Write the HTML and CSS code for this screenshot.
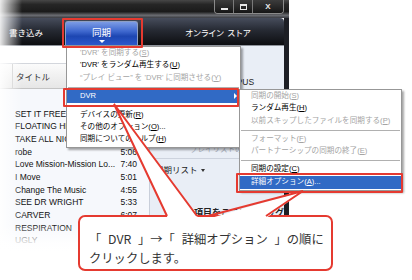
FILE: index.html
```html
<!DOCTYPE html>
<html lang="ja">
<head>
  <meta charset="UTF-8" />
  <meta name="viewport" content="width=device-width, initial-scale=1" />
  <title>同期 - 詳細オプション</title>
  <link rel="stylesheet" href="styles.css">
</head>
<body>

<div class="stage">

  <div class="window">
    <div class="titlebar">
      <div class="winbtns">
        <span class="wb wb-min"><i></i></span>
        <span class="wb wb-max"><i></i></span>
        <span class="wb wb-close">X</span>
      </div>
    </div>

    <div class="frame">
      <div class="tabbar">
        <span class="tab tab-burn">書き込み</span>
        <span class="tab tab-sync">同期</span>
        <span class="tab tab-store">オンライン ストア</span>
      </div>

      <div class="content">
        <div class="library">
          <div class="toolbar"></div>
          <div class="colhead"><span class="col">タイトル</span></div>
          <ul class="tracks">
            <li><span>SET IT FREE</span></li>
            <li><span>FLOATING HEART</span></li>
            <li><span>TAKE ALL NIGHT</span></li>
            <li><span>robe</span><span>5:06</span></li>
            <li><span>Love Mission-Mission Lo...</span><span>7:40</span></li>
            <li><span>I Move</span><span>5:01</span></li>
            <li><span>Change The Music</span><span>4:55</span></li>
            <li><span>SEE DR WRIGHT</span><span>5:33</span></li>
            <li><span>CARVER</span><span>6:07</span></li>
            <li><span>RESPIRATION</span></li>
            <li><span>UGLY</span></li>
          </ul>
        </div>

        <div class="synclist">
          <div class="device">OPUS</div>
          <div class="faint">プレイリストの再生</div>
          <div class="listhead">同期リスト <span class="drop"></span></div>
          <div class="hint">項目をここにドラッグ</div>
        </div>
      </div>
    </div>

    <div class="fade fade-left"></div>
    <div class="fade fade-bottom"></div>
  </div>

  <!-- sync menu -->
  <div class="menu menu-main">
    <div class="mi off"><span>'DVR' を同期する(<u>S</u>)</span></div>
    <div class="mi"><span>'DVR' をランダム再生する(<u>U</u>)</span></div>
    <div class="mi off"><span>“プレイ ビュー” を 'DVR' に同期させる(<u>Y</u>)</span></div>
    <div class="sep"></div>
    <div class="mi hot"><span>DVR</span><span class="arrow"></span></div>
    <div class="sep"></div>
    <div class="mi"><span>デバイスの更新(<u>R</u>)</span></div>
    <div class="mi"><span>その他のオプション(<u>O</u>)...</span></div>
    <div class="mi"><span>同期についてのヘルプ(<u>H</u>)</span></div>
  </div>

  <!-- DVR submenu -->
  <div class="menu menu-sub">
    <div class="mi off"><span>同期の開始(<u>S</u>)</span></div>
    <div class="mi"><span>ランダム再生(<u>H</u>)</span></div>
    <div class="mi off"><span>以前スキップしたファイルを同期する(<u>P</u>)</span></div>
    <div class="sep"></div>
    <div class="mi off"><span>フォーマット(<u>F</u>)</span></div>
    <div class="mi off"><span>パートナーシップの同期の終了(<u>E</u>)</span></div>
    <div class="sep"></div>
    <div class="mi"><span>同期の設定(<u>C</u>)</span></div>
    <div class="mi hot"><span>詳細オプション(<u>A</u>)...</span></div>
  </div>

  <div class="mark mark-tab"></div>
  <div class="mark mark-dvr"></div>
  <div class="mark mark-adv"></div>

  <div class="callout">
    「 DVR 」→「 詳細オプション 」の順に<br>クリックします。
  </div>

  <svg class="tails" width="412" height="280" viewBox="0 0 412 280">
    <polygon class="tail-fill" points="114,104 199.5,219.5 168.5,219.5"/>
    <polyline class="tail-edge" points="167,216 114,104 197,216"/>
    <polygon class="tail-fill" points="303,191 264,219.5 206,219.5"/>
    <polyline class="tail-edge" points="208,216 303,191 266,216"/>
  </svg>

</div>

</body>
</html>
```

FILE: styles.css
```css
html, body {
  margin: 0;
  padding: 0;
  background: #fff;
}

body {
  font-family: "Liberation Sans", "Noto Sans CJK JP", sans-serif;
}

.stage {
  position: relative;
  width: 412px;
  height: 280px;
  overflow: hidden;
}

/* player window */
.window {
  position: relative;
  width: 289px;
  height: 280px;
  display: flex;
  flex-direction: column;
  background: #fff;
}

.titlebar {
  height: 18px;
  display: flex;
  justify-content: flex-end;
  background: linear-gradient(#474747 0, #262626 25%, #1b1b1b 65%, #6b6d72 85%, #3a3c42 100%);
}

.winbtns {
  display: flex;
  height: 13px;
  margin-right: 5px;
  border: 1px solid #8a8a8a;
  border-top: none;
  border-radius: 0 0 4px 4px;
  overflow: hidden;
}

.wb {
  display: flex;
  align-items: center;
  justify-content: center;
  width: 18px;
  background: linear-gradient(#3c3c3c, #161616);
  border-left: 1px solid #7a7a7a;
  color: #e8e8e8;
  font-size: 8px;
  font-weight: bold;
}

.wb:first-child {
  border-left: none;
}

.wb-close {
  width: 30px;
}

.wb-min i {
  width: 7px;
  height: 2px;
  margin-top: 4px;
  background: #e8e8e8;
}

.wb-max i {
  width: 5px;
  height: 3px;
  border: 1px solid #e8e8e8;
  border-top-width: 2px;
}

.frame {
  flex: 1;
  display: flex;
  flex-direction: column;
  border-right: 5px solid #1d1f25;
  min-height: 0;
}

.tabbar {
  height: 27px;
  display: flex;
  align-items: flex-end;
  padding-left: 9px;
  background: linear-gradient(#474d5c 0, #262a33 45%, #0d0e11 100%);
  border-top-right-radius: 4px;
  color: #fff;
  font-size: 8.5px;
}

.tab {
  align-self: center;
  white-space: nowrap;
}

.tab-sync {
  align-self: flex-end;
  position: relative;
  width: 73px;
  height: 24px;
  margin-left: 22px;
  box-sizing: border-box;
  text-align: center;
  line-height: 22px;
  font-size: 9.5px;
  border: 1px solid #8e9fc4;
  border-bottom: none;
  border-radius: 3px 3px 0 0;
  background: linear-gradient(#7c9be4 0, #3f68cf 40%, #1d46b2 62%, #2b58cc 100%);
}

.tab-sync::after {
  content: "";
  position: absolute;
  left: 50%;
  bottom: 2px;
  margin-left: -3px;
  border-top: 3px solid #fff;
  border-left: 3px solid transparent;
  border-right: 3px solid transparent;
}

.tab-store {
  margin-left: 47px;
  letter-spacing: -0.8px;
  word-spacing: 2px;
}

.content {
  flex: 1;
  display: flex;
  border-top: 1px solid #8f949c;
  min-height: 0;
}

.library {
  width: 155px;
  background: #f6f8fc;
  border-right: 1px solid #c9cfda;
  box-sizing: border-box;
}

.toolbar {
  height: 17px;
  background: #fff;
  border-bottom: 1px solid #d3d6dc;
}

.colhead {
  height: 24px;
  display: flex;
  background: linear-gradient(#fbfbfb, #e6e6e6);
  border-bottom: 1px solid #c4c4c4;
  font-size: 8.5px;
  color: #333;
}

.col {
  display: flex;
  align-items: center;
  margin-left: 12px;
  padding-left: 3px;
  border-left: 1px solid #c8c8c8;
}

.tracks {
  list-style: none;
  margin: 18.7px 0 0;
  padding: 0;
  font-size: 8.5px;
  color: #111;
}

.tracks li {
  display: flex;
  justify-content: space-between;
  height: 12.67px;
  line-height: 12.67px;
  padding: 0 12px 0 15px;
  white-space: nowrap;
}

.synclist {
  flex: 1;
  display: flex;
  flex-direction: column;
  background: #e9eef6;
  font-size: 8.5px;
  color: #222;
}

.device {
  margin-top: 30px;
  height: 12px;
  line-height: 12px;
  padding-left: 80px;
}

.faint {
  margin-top: 56px;
  height: 12px;
  line-height: 12px;
  padding: 0 0 2px 40px;
  color: #a9b0bc;
  font-size: 7.5px;
  border-bottom: 1px solid #cdd3de;
  white-space: nowrap;
}

.listhead {
  margin-top: 5px;
  height: 12px;
  line-height: 12px;
  padding-left: 5px;
  display: flex;
  align-items: center;
  gap: 3px;
}

.drop {
  border-top: 3px solid #333;
  border-left: 2.5px solid transparent;
  border-right: 2.5px solid transparent;
}

.hint {
  margin-top: 31px;
  height: 12px;
  line-height: 12px;
  padding-left: 44px;
  font-weight: bold;
  font-size: 9px;
  white-space: nowrap;
}

.fade {
  position: absolute;
  pointer-events: none;
}

.fade-left {
  left: 0;
  top: 0;
  width: 22px;
  height: 100%;
  background: linear-gradient(to right, rgba(255, 255, 255, 0.9), rgba(255, 255, 255, 0));
}

.fade-bottom {
  left: 0;
  right: 0;
  top: 224px;
  bottom: 0;
  background: linear-gradient(rgba(255, 255, 255, 0) 0, rgba(255, 255, 255, 0.9) 20px, #fff 28px);
}

/* context menus */
.menu {
  position: absolute;
  background: #fff;
  border: 1px solid #979797;
  box-shadow: 2px 2px 2px rgba(0, 0, 0, 0.35);
  padding: 0 0 1px;
  font-size: 7.6px;
  color: #000;
}

.menu-main {
  left: 66px;
  top: 46px;
  width: 173px;
}

.menu-sub {
  left: 239px;
  top: 89px;
  width: 161px;
}

.mi {
  display: flex;
  justify-content: space-between;
  align-items: center;
  height: 12.3px;
  line-height: 12.3px;
  padding-left: 13px;
  white-space: nowrap;
}

.menu-sub .mi {
  padding-left: 11px;
}

.mi.off {
  color: #a4a4a4;
}

.mi.hot {
  height: 13px;
  background: #316ac5;
  color: #fff;
}

.arrow {
  margin-right: 3px;
  border-left: 3px solid #fff;
  border-top: 3px solid transparent;
  border-bottom: 3px solid transparent;
}

.sep {
  height: 0;
  margin: 3px 1px 2px;
  border-top: 1px solid #b0b0b0;
}

/* red highlight frames */
.mark {
  position: absolute;
  border: 2px solid #e53a30;
  border-radius: 1px;
  box-sizing: border-box;
}

.mark-tab {
  left: 62px;
  top: 18px;
  width: 81px;
  height: 30px;
}

.mark-dvr {
  left: 63px;
  top: 88px;
  width: 176px;
  height: 19px;
}

.mark-adv {
  left: 236px;
  top: 173px;
  width: 167px;
  height: 20px;
}

/* speech bubble */
.callout {
  position: absolute;
  left: 78px;
  top: 215px;
  width: 255px;
  height: 56px;
  box-sizing: border-box;
  padding: 12.5px 0 0 9px;
  background: #fff;
  border: 2px solid #e53a30;
  border-radius: 7px;
  font-family: "Noto Sans CJK JP", "Liberation Sans", sans-serif;
  font-size: 12.3px;
  line-height: 19px;
  word-spacing: 4px;
  color: #333;
  white-space: nowrap;
}

.tails {
  position: absolute;
  left: 0;
  top: 0;
  pointer-events: none;
}

.tail-fill {
  fill: #fff;
}

.tail-edge {
  fill: none;
  stroke: #e53a30;
  stroke-width: 2;
}
```
